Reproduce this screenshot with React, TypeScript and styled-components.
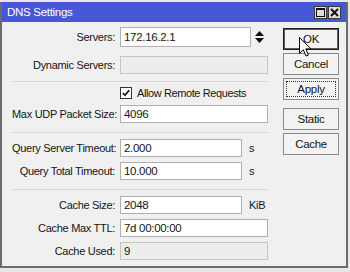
import React from 'react';
import styled, { createGlobalStyle, css } from 'styled-components';

const Global = createGlobalStyle`
  html, body { margin: 0; padding: 0; background: #e8e8e8; }
  body {
    font-family: "Liberation Sans", Arial, sans-serif;
    font-size: 11px;
    color: #151515;
  }
`;

const Window = styled.div`
  margin-top: 2px;
  width: 348px;
  height: 266px;
  box-sizing: border-box;
  border: 2px solid #6c6c6c;
  border-top: none;
  background: #f0f0f0;
  display: flex;
  flex-direction: column;
`;

const TitleBar = styled.div`
  height: 20px;
  flex: none;
  background: #4757d6;
  color: #fff;
  display: flex;
  align-items: center;
  justify-content: space-between;
  padding: 0 5px 0 5px;
`;

const TitleText = styled.span`
  font-size: 11.5px;
  letter-spacing: -0.3px;
`;

const TitleButtons = styled.div`
  display: flex;
  gap: 1px;
`;

const TitleButton = styled.div`
  width: 13px;
  height: 13px;
  box-sizing: border-box;
  background: #dedede;
  border: 1px solid #3a3a3a;
  display: flex;
  align-items: center;
  justify-content: center;
`;

const Body = styled.div`
  display: flex;
  align-items: flex-start;
  padding: 5px 7px 0 10px;
`;

const Form = styled.div`
  width: 256px;
  display: flex;
  flex-direction: column;
`;

const Row = styled.div<{ $h?: number; $mt?: number }>`
  display: flex;
  align-items: center;
  height: ${(p) => p.$h ?? 18}px;
  margin-top: ${(p) => p.$mt ?? 5}px;
  flex: none;
`;

const Label = styled.div`
  width: 103px;
  margin-right: 5px;
  text-align: right;
  white-space: nowrap;
  letter-spacing: -0.3px;
  line-height: 14px;
`;

const Field = styled.div<{ $w: number; $h?: number; $disabled?: boolean }>`
  width: ${(p) => p.$w}px;
  height: ${(p) => p.$h ?? 18}px;
  box-sizing: border-box;
  padding: 0 3px;
  display: flex;
  align-items: center;
  white-space: nowrap;
  font-size: 11.5px;
  letter-spacing: -0.3px;
  line-height: 14px;
  ${(p) =>
    p.$disabled
      ? css`
          background: #ededed;
          border: 1px solid #c4c4c4;
        `
      : css`
          background: #fff;
          border: 1px solid #aeb0b5;
        `}
`;

const Unit = styled.span`
  margin-left: 7px;
  line-height: 14px;
  letter-spacing: -0.3px;
`;

const Separator = styled.div<{ $top: number }>`
  flex: none;
  height: 0;
  margin-top: ${(p) => p.$top}px;
  border-top: 1px solid #d6d6d6;
`;

const CheckRow = styled.label`
  flex: none;
  display: flex;
  align-items: center;
  height: 18px;
  line-height: 14px;
  letter-spacing: -0.4px;
  margin: 2px 0 0 108px;
  gap: 5px;
`;

const CheckBox = styled.span`
  width: 12px;
  height: 12px;
  box-sizing: border-box;
  background: #fff;
  border: 1px solid #333;
  display: flex;
  align-items: center;
  justify-content: center;
`;

const ButtonCol = styled.div`
  position: relative;
  margin-left: 15px;
  padding-top: 1px;
  width: 56px;
  display: flex;
  flex-direction: column;
  gap: 3px;
`;

const Button = styled.div<{ $default?: boolean; $focus?: boolean; $gapBefore?: number }>`
  position: relative;
  height: 22px;
  flex: none;
  box-sizing: border-box;
  background: #f3f3f3;
  border: 1px solid #8a8a8a;
  display: flex;
  align-items: center;
  justify-content: center;
  font-size: 11.5px;
  letter-spacing: -0.3px;
  margin-top: ${(p) => p.$gapBefore ?? 0}px;
  ${(p) =>
    p.$default &&
    css`
      border: 1px solid #1e1e1e;
      box-shadow: inset 0 0 0 1px #5a5a5a;
    `}
  ${(p) =>
    p.$focus &&
    css`
      &::after {
        content: '';
        position: absolute;
        inset: 2px;
        border: 1px dotted #333;
      }
    `}
`;

const Cursor = styled.svg`
  position: absolute;
  left: 16px;
  top: 10px;
`;

const Spinner = styled.svg`
  margin-left: 4px;
`;

export default function App() {
  return (
    <>
      <Global />
      <Window>
        <TitleBar>
          <TitleText>DNS Settings</TitleText>
          <TitleButtons>
            <TitleButton>
              <svg width="9" height="9" viewBox="0 0 9 9">
                <rect x="0.5" y="0.5" width="8" height="8" fill="none" stroke="#111" strokeWidth="1" />
                <rect x="0" y="0" width="9" height="2" fill="#111" />
              </svg>
            </TitleButton>
            <TitleButton>
              <svg width="9" height="9" viewBox="0 0 9 9">
                <path d="M1 1 L8 8 M8 1 L1 8" stroke="#111" strokeWidth="2" />
              </svg>
            </TitleButton>
          </TitleButtons>
        </TitleBar>
        <Body>
          <Form>
            <Row $h={20} $mt={0}>
              <Label>Servers:</Label>
              <Field $w={131} $h={20}>172.16.2.1</Field>
              <Spinner width="9" height="13" viewBox="0 0 9 13">
                <path d="M4.5 0 L9 5 L0 5 Z M0 7 L9 7 L4.5 12 Z" fill="#111" />
              </Spinner>
            </Row>
            <Row $mt={9}>
              <Label>Dynamic Servers:</Label>
              <Field $w={148} $disabled />
            </Row>
            <Separator $top={7} />
            <CheckRow>
              <CheckBox>
                <svg width="8" height="8" viewBox="0 0 8 8">
                  <path d="M0.8 4 L3 6.3 L7.2 1.2" fill="none" stroke="#111" strokeWidth="1.7" />
                </svg>
              </CheckBox>
              Allow Remote Requests
            </CheckRow>
            <Row $mt={3}>
              <Label>Max UDP Packet Size:</Label>
              <Field $w={148}>4096</Field>
            </Row>
            <Separator $top={9} />
            <Row $mt={6}>
              <Label>Query Server Timeout:</Label>
              <Field $w={122}>2.000</Field>
              <Unit>s</Unit>
            </Row>
            <Row>
              <Label>Query Total Timeout:</Label>
              <Field $w={122}>10.000</Field>
              <Unit>s</Unit>
            </Row>
            <Separator $top={9} />
            <Row $mt={6}>
              <Label>Cache Size:</Label>
              <Field $w={122}>2048</Field>
              <Unit>KiB</Unit>
            </Row>
            <Row>
              <Label>Cache Max TTL:</Label>
              <Field $w={148}>7d 00:00:00</Field>
            </Row>
            <Row>
              <Label>Cache Used:</Label>
              <Field $w={148} $disabled>9</Field>
            </Row>
          </Form>
          <ButtonCol>
            <Button $default>OK</Button>
            <Button>Cancel</Button>
            <Button $focus>Apply</Button>
            <Button $gapBefore={5}>Static</Button>
            <Button>Cache</Button>
            <Cursor width="13" height="21" viewBox="0 0 13 21">
              <path
                d="M0.5 0.5 L0.5 16.5 L4.3 12.8 L7 19 L9.4 18 L6.8 11.9 L11.8 11.9 Z"
                fill="#fff"
                stroke="#000"
                strokeWidth="1"
                strokeLinejoin="round"
              />
            </Cursor>
          </ButtonCol>
        </Body>
      </Window>
    </>
  );
}
